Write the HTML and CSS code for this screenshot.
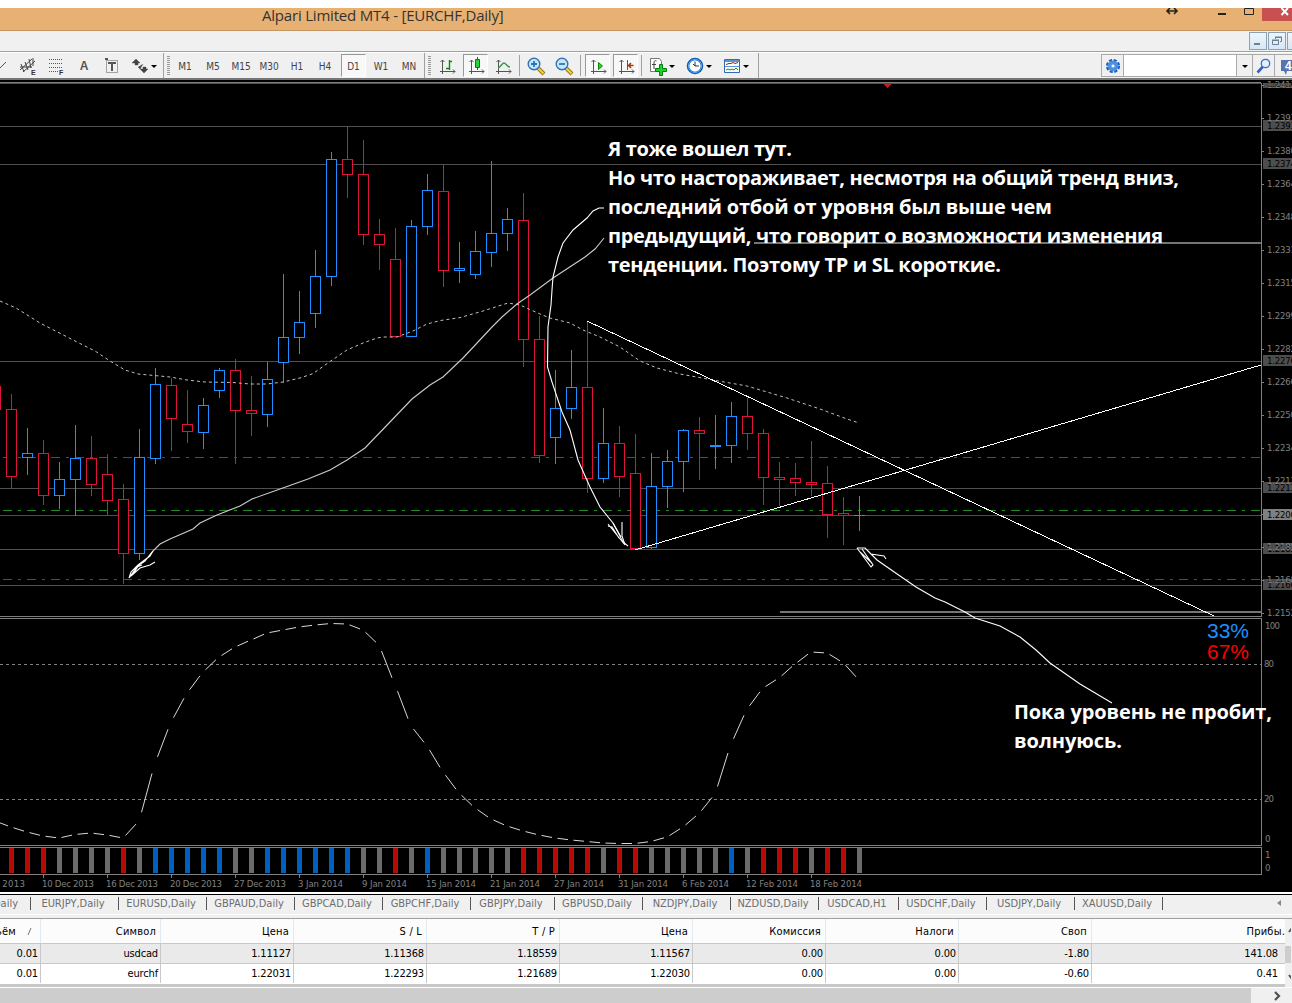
FILE: index.html
```html
<!DOCTYPE html>
<html lang="ru">
<head>
  <meta charset="UTF-8">
  <title>Alpari Limited MT4 - [EURCHF,Daily]</title>
  <link rel="stylesheet" href="styles.css">
</head>
<body>
<div class="terminal">

  <!-- Title bar -->
  <div class="titlebar">
    <span class="title">Alpari Limited MT4 - [EURCHF,Daily]</span>
    <svg class="window-buttons" width="132" height="22" viewBox="1160 8 132 22">
      <path d="M1167 11h10M1170 8l-3 3 3 3M1174 8l3 3-3 3" fill="none" stroke="#222" stroke-width="1.600"/>
      <rect x="1218" y="13" width="8" height="2" fill="#222"/>
      <path d="M1244.500 8.500h9v6h-9z" fill="none" stroke="#222"/>
      <rect x="1262" y="8" width="30" height="13" fill="#c75050"/>
      <path d="M1281.500 8l6.500 7M1288 8l-6.500 7" stroke="#fff" stroke-width="2"/>
    </svg>
  </div>

  <!-- Menu strip -->
  <div class="menubar">
    <span class="mdi"><svg width="16" height="16"><path d="M4 11h6" stroke="#6d7f92" stroke-width="2"/></svg></span>
    <span class="mdi"><svg width="16" height="16"><path d="M6.500 6V4.500h6v4H11M6 4h7M3.500 7.500h6v4h-6zM3 7h7" fill="none" stroke="#6d7f92"/></svg></span>
    <span class="mdi last"></span>
  </div>

  <!-- Toolbar -->
  <div class="toolbar">
    <div class="group tools">
      <span class="slot half"><svg width="14" height="22"><path d="M0 13l6-6" stroke="#555"/></svg></span>
      <span class="slot"><svg width="20" height="20"><path d="M2 14L14 3M5 16L17 5M3 8l3 8M7 6l3 8M11 3l2 9M15 2l0 8M2 11h12" fill="none" stroke="#444"/><text class="sub" x="13" y="19">E</text></svg></span>
      <span class="slot"><svg width="20" height="20"><path d="M3 3.500h14M3 7.500h14M3 11.500h14M3 15.500h9" stroke="#555" stroke-dasharray="1 1"/><text class="sub" x="13" y="19">F</text></svg></span>
      <span class="slot letter">A</span>
      <span class="slot"><svg width="20" height="20"><path d="M4.500 4.500h11v12h-11z" fill="none" stroke="#555" stroke-dasharray="1 1"/><path d="M6 7h8M10 7v8M3 3h3" stroke="#555" stroke-width="2"/></svg></span>
      <span class="slot"><svg width="20" height="20"><path d="M6 3l4 4H8v2H5V7H2zM8 11l2 2 3-5M13 11h3v2h2l-4 4-4-4h3z" fill="#444" stroke="#444" stroke-width=".4"/></svg></span>
      <span class="caret"></span>
    </div>
    <div class="group frames">
      <i class="grip"></i>
      <span class="slot">M1</span><span class="slot">M5</span><span class="slot">M15</span><span class="slot">M30</span><span class="slot">H1</span><span class="slot">H4</span><span class="slot pressed">D1</span><span class="slot">W1</span><span class="slot">MN</span>
    </div>
    <div class="group charts">
      <i class="grip"></i>
      <span class="slot"><svg width="20" height="20"><path d="M5.500 4v14M3 15.500h15M3.500 6l2-2 2 2M16 13.500l2 2-2 2" fill="none" stroke="#555"/><path d="M12.500 4v10M12 5.500h3M9 12.500h3" stroke="#0a8a0a" stroke-width="1.400"/></svg></span>
      <span class="slot pressed"><svg width="20" height="20"><path d="M5.500 4v14M3 15.500h15M3.500 6l2-2 2 2M16 13.500l2 2-2 2" fill="none" stroke="#555"/><path d="M11.500 1v13" stroke="#087808"/><path d="M9.500 3.500h4v8h-4z" fill="#25d335" stroke="#087808"/></svg></span>
      <span class="slot"><svg width="20" height="20"><path d="M5.500 4v14M3 15.500h15M3.500 6l2-2 2 2M16 13.500l2 2-2 2" fill="none" stroke="#555"/><path d="M5 12c3-1 4-5 6-5s3 4 6 4" fill="none" stroke="#3a9a4a" stroke-width="1.400"/></svg></span>
      <i class="sep"></i>
      <span class="slot"><svg width="20" height="20"><path d="M12 12l6 6" stroke="#9a7a10" stroke-width="4"/><path d="M12 12l5.500 5.500" stroke="#f3d04a" stroke-width="2"/><circle cx="8" cy="8" r="5.800" fill="#c5e7fa" stroke="#3273b8" stroke-width="1.400"/><path d="M5 8h6M8 5v6" stroke="#3273b8" stroke-width="1.800"/></svg></span>
      <span class="slot"><svg width="20" height="20"><path d="M12 12l6 6" stroke="#9a7a10" stroke-width="4"/><path d="M12 12l5.500 5.500" stroke="#f3d04a" stroke-width="2"/><circle cx="8" cy="8" r="5.800" fill="#c5e7fa" stroke="#3273b8" stroke-width="1.400"/><path d="M5 8h6" stroke="#3273b8" stroke-width="1.800"/></svg></span>
      <i class="sep"></i>
      <span class="slot pressed"><svg width="20" height="20"><path d="M5.500 4v14M3 15.500h15M3.500 6l2-2 2 2M16 13.500l2 2-2 2" fill="none" stroke="#555"/><path d="M10.500 6.500v7l4-3.500z" fill="#3c3" stroke="#0a8a0a"/></svg></span>
      <span class="slot pressed"><svg width="20" height="20"><path d="M5.500 4v14M3 15.500h15M3.500 6l2-2 2 2M16 13.500l2 2-2 2" fill="none" stroke="#555"/><path d="M11.500 4v10" stroke="#156b9a"/><path d="M12.500 9.500h5M15 7l-2.500 2.500L15 12" fill="none" stroke="#a8350f" stroke-width="1.500"/></svg></span>
      <i class="sep"></i>
      <span class="slot"><svg width="20" height="20"><path d="M2.500 2.500h9l2 3v10h-11z" fill="#fff" stroke="#777"/><path d="M8.500 5c-2-1-2.500 0-2.500 3v5M4 8.500h4" fill="none" stroke="#444"/><path d="M7.500 12.500h4v-4h3v4h4v3h-4v4h-3v-4h-4z" fill="#18d62a" stroke="#067a10"/></svg></span>
      <span class="caret"></span>
      <span class="slot"><svg width="20" height="20"><circle cx="10" cy="10" r="7" fill="#fff" stroke="#125dba" stroke-width="2.600"/><circle cx="10" cy="10" r="6.500" fill="none" stroke="#5db2f4"/><path d="M10 5.500V10h4M10 10l-2-2" fill="none" stroke="#333"/></svg></span>
      <span class="caret"></span>
      <span class="slot"><svg width="20" height="20"><path d="M2.500 3.500h15v13h-15z" fill="#fff" stroke="#2d6bb4"/><path d="M3 5h14" stroke="#5b96d3" stroke-width="2"/><path d="M3 10.500h14" stroke="#5b96d3"/><path d="M4 8.500l3-1 2 0 2-1 2 1 3-1" fill="none" stroke="#902a1c"/><path d="M4 14l2-1 2 1 2-1 2 1 2-2 2 2" fill="none" stroke="#16882a"/></svg></span>
      <span class="caret"></span>
    </div>
    <div class="search">
      <span class="gear"><svg width="16" height="16"><circle cx="8" cy="8" r="5.800" fill="none" stroke="#1d5cb8" stroke-width="2.600" stroke-dasharray="3 1.550"/><circle cx="8" cy="8" r="3.600" fill="#8fc0f2" stroke="#4d8fe0" stroke-width="3.600"/><circle cx="8" cy="8" r="1.300" fill="#fff"/></svg></span>
      <span class="field"></span>
      <span class="drop"><i class="caret"></i></span>
      <span class="find"><svg width="16" height="16"><path d="M1.500 14.500L7 8.500" stroke="#3a5fc0" stroke-width="2.600"/><circle cx="9.500" cy="5.500" r="4.200" fill="#e3f0fd" stroke="#3a6cc8" stroke-width="1.300"/></svg></span>
      <span class="chat"><svg width="12" height="18"><path d="M1 3h11v11H7l-1 4-2-4H1z" fill="#5873ad"/><text x="5" y="13" class="count">4</text></svg></span>
    </div>
  </div>

  <!-- Chart area, filled from script.js -->
  <svg class="chart" id="chart" width="1292" height="812" viewBox="0 80 1292 812">
    <g id="levels" shape-rendering="crispEdges"></g>
    <g id="candles" shape-rendering="crispEdges"></g>
    <polyline class="ma" points="0,301 16,308 40,323 75,341 95,351 110,361 125,370 138,374 170,377 187,380 205,382 233,382.500 250,384 267,384 283,382 300,378 313,373.600 330,361.500 347,350 363,343 377,338 383,337 397,337 413,331 427,324 440,320.600 460,317.600 483,311 508,303 520,305 540,314 550,318 570,323 583,330 600,337 620,347 640,361 657,368 680,374 713,380 747,386 787,398 820,409 847,419 859,423"/>
    <g class="trend" shape-rendering="crispEdges">
      <path d="M587 321L1214 616M635 550L1261 365"/>
    </g>
    <g id="oscillator"></g>
    <g id="strip" shape-rendering="crispEdges"></g>
    <g id="frame" shape-rendering="crispEdges"></g>
    <g id="axis"></g>

    <!-- hand drawn arrows -->
    <g class="pen">
      <path class="soft" d="M604 238L600 243 595 249 585 257 553 278 530 295 517 304 502 317 492 327 478 342 463 358 443 377 430 385 412 399 390 422 365 448 347 460 330 470 308 479 280 489 252 499 240 506 217 515 200 523 193 529 170 539 160 544 152 552"/>
      <path d="M152 552L145 561 139 565 135 571 129 578M129 578L131 572 138 565 150 556 153 551M129 578L137 567 142 565M131 576L140 568 150 565 155 562"/>
      <path d="M604 208H599L593 211 587 218 573 230 563 243 558 257 553 277 552 290 551 305 548 327 547.500 367 552 382 562 412 570 430 578 460 590 487 600 507 613 523 623 542 628 546"/>
      <path d="M608 524L625 545M608 526L612 527 619 538M622 522V536L625 545M613 523L621 537"/>
      <path d="M857 548H865L877 560 900 576 916 587 935 598 945 602 965 612 975 618 1000 626 1020 637 1036 650 1050 663 1080 684 1112 703M857 548L871 567 873 565 862 549M865 548L871 554 884 556 886 559M860 552L872 563"/>
    </g>

    <text class="pct up" x="1207" y="638" textLength="42">33%</text>
    <text class="pct down" x="1207" y="659" textLength="42">67%</text>

    <g class="note">
      <text x="608" y="156" textLength="184">Я тоже вошел тут.</text>
      <text x="608" y="185" textLength="571">Но что настораживает, несмотря на общий тренд вниз,</text>
      <text x="608" y="214" textLength="444">последний отбой от уровня был выше чем</text>
      <text x="608" y="243" textLength="555">предыдущий, что говорит о возможности изменения</text>
      <text x="608" y="272" textLength="393">тенденции. Поэтому TP и SL короткие.</text>
      <text x="1014" y="719" textLength="258">Пока уровень не пробит,</text>
      <text x="1014" y="748" textLength="108">волнуюсь.</text>
    </g>
  </svg>

  <!-- Chart tabs -->
  <div class="tabs">
    <span class="tab cut">CHF,Daily</span><span class="tab">EURJPY,Daily</span><span class="tab">EURUSD,Daily</span><span class="tab">GBPAUD,Daily</span><span class="tab">GBPCAD,Daily</span><span class="tab">GBPCHF,Daily</span><span class="tab mid">GBPJPY,Daily</span><span class="tab">GBPUSD,Daily</span><span class="tab">NZDJPY,Daily</span><span class="tab">NZDUSD,Daily</span><span class="tab small">USDCAD,H1</span><span class="tab">USDCHF,Daily</span><span class="tab">USDJPY,Daily</span><span class="tab">XAUUSD,Daily</span>
    <i class="scroll-left"></i>
  </div>

  <!-- Orders -->
  <div class="orders">
    <div class="table">
      <div class="row head">
        <span class="sorted">Объём <svg width="6" height="9"><path d="M1 8l3-7" stroke="#777"/></svg></span><span>Символ</span><span>Цена</span><span>S / L</span><span>T / P</span><span>Цена</span><span>Комиссия</span><span>Налоги</span><span>Своп</span><span class="profit">Прибы.</span>
      </div>
      <div class="row odd">
        <span>0.01</span><span>usdcad</span><span>1.11127</span><span>1.11368</span><span>1.18559</span><span>1.11567</span><span>0.00</span><span>0.00</span><span>-1.80</span><span>141.08</span>
      </div>
      <div class="row">
        <span>0.01</span><span>eurchf</span><span>1.22031</span><span>1.22293</span><span>1.21689</span><span>1.22030</span><span>0.00</span><span>0.00</span><span>-0.60</span><span>0.41</span>
      </div>
    </div>
    <div class="vscroll"><svg width="6" height="66"><path d="M4 13l3-4M4 56l3 4" stroke="#555" stroke-width="2"/><rect y="27" width="6" height="17" fill="#cdcdcd"/></svg></div>
  </div>
  <div class="hscroll"><i class="thumb"></i><svg width="12" height="12"><path d="M4 2l4 4-4 4" fill="none" stroke="#505050" stroke-width="2.200"/></svg></div>
</div>
<script src="script.js"></script>
</body>
</html>
```
FILE: styles.css
```css
* {
  box-sizing: border-box;
}

body {
  margin: 0;
  background: #fff;
  font-family: "DejaVu Sans Condensed", "DejaVu Sans", sans-serif;
  font-stretch: condensed;
  font-size: 11px;
  overflow: hidden;
}

.terminal {
  width: 1292px;
  height: 1003px;
  padding-top: 8px;
  display: flex;
  flex-direction: column;
  overflow: hidden;
}

.terminal > * {
  flex: none;
}

/* title */
.titlebar {
  height: 23px;
  background: #e7b174;
  border-bottom: 1px solid #c49562;
  display: flex;
  justify-content: space-between;
}

.title {
  padding-left: 262px;
  font: 15px/15px "Open Sans", sans-serif;
  letter-spacing: -0.2px;
  color: #333;
  white-space: nowrap;
}

/* menu */
.menubar {
  height: 21px;
  background: #f0f0f0;
  border-bottom: 1px solid #a0a0a0;
  display: flex;
  justify-content: flex-end;
  gap: 1px;
  padding-top: 1px;
}

.mdi {
  width: 18px;
  height: 18px;
  border: 1px solid #8ea0b4;
  background: linear-gradient(#eef6fc, #d5e6f5);
}

.mdi.last {
  width: 5px;
  border-right: 0;
}

/* toolbar */
.toolbar {
  height: 28px;
  background: #f0f0f0;
  border-top: 1px solid #fff;
  border-bottom: 2px solid #777;
  display: flex;
}

.group {
  display: flex;
  height: 25px;
  border-right: 1px solid #a0a0a0;
}

.tools {
  width: 164px;
}

.frames {
  width: 261px;
  padding-left: 3px;
}

.charts {
  width: 334px;
  padding-left: 3px;
}

.slot {
  flex: none;
  width: 28px;
  height: 25px;
  padding-top: 1px;
  display: flex;
  align-items: center;
  justify-content: center;
  color: #444;
  font-size: 10px;
}

.slot svg {
  flex: none;
}

.slot.half {
  width: 14px;
}

.slot.letter {
  font: bold 12px "Liberation Sans", sans-serif;
  color: #555;
}

.sub {
  font: bold 7px "Liberation Sans", sans-serif;
  fill: #333;
}

.slot.pressed {
  width: 25px;
  height: 23px;
  margin: 1px 1px 0 2px;
  background: #f8f8f8;
  border: 1px solid #999;
  border-right-color: #fff;
  border-bottom-color: #fff;
}

.caret {
  flex: none;
  width: 6px;
  height: 3px;
  align-self: center;
  border: 3px solid transparent;
  border-top-color: #000;
  border-bottom: 0;
  margin-top: 1px;
}

.tools .caret {
  margin-left: -3px;
}

.charts .caret {
  margin-left: -3px;
  margin-right: 6px;
}

.grip {
  width: 3px;
  height: 19px;
  margin: 3px 1px 0 0;
  background: repeating-linear-gradient(#999 0 1px, #f0f0f0 1px 2px);
}

.charts .grip {
  margin-right: 2px;
}

.sep {
  flex: none;
  width: 1px;
  height: 21px;
  margin: 2px 2px 0 2px;
  background: #a0a0a0;
}

.search {
  margin-left: auto;
  display: flex;
  width: 191px;
  height: 23px;
  margin-top: 1px;
  border: 1px solid #aaa;
  border-right: 0;
}

.search > span {
  display: flex;
  align-items: center;
  justify-content: center;
  border-right: 1px solid #aaa;
}

.search .gear {
  width: 22px;
}

.search .field {
  width: 113px;
  background: #fff;
}

.search .drop {
  width: 16px;
}

.search .find {
  width: 22px;
}

.search .chat {
  width: 17px;
  border-right: 0;
  justify-content: flex-end;
}

.count {
  font: bold 12px "Liberation Sans", sans-serif;
  fill: #fff;
}

/* chart */
.chart {
  display: block;
  background: #000;
}

.ma {
  fill: none;
  stroke: #c0c0c0;
  stroke-dasharray: 3 3;
}

.trend {
  fill: none;
  stroke: #fff;
}

.pen {
  fill: none;
  stroke: #fff;
  stroke-width: 1.1;
}

.pen .soft {
  stroke: #ccc;
}

.axis-text {
  font: 9.5px "DejaVu Sans Condensed", sans-serif;
  fill: #808080;
}

.axis-text.dark {
  fill: #000;
}

.pct {
  font: 21px "Liberation Sans", sans-serif;
}

.pct.up {
  fill: #1e90ff;
}

.pct.down {
  fill: #f00;
}

.note {
  font: bold 20px "Open Sans", sans-serif;
  fill: #fff;
}

/* tabs */
.tabs {
  height: 26px;
  background: #f0f0f0;
  border-top: 2px solid #fff;
  box-shadow: inset 0 1px 0 #000, inset 0 -3px 0 #f0f0f0, inset 0 -4px 0 #fff;
  display: flex;
  padding-top: 3px;
}

.tab {
  width: 88px;
  height: 13px;
  line-height: 13px;
  padding-right: 3px;
  border-right: 1px solid #555;
  text-align: center;
  color: #6d6d6d;
  white-space: nowrap;
}

.tab.cut {
  width: 31px;
  padding-right: 12px;
  display: flex;
  justify-content: flex-end;
}

.tab.mid {
  width: 84px;
}

.tab.small {
  width: 80px;
}

.scroll-left {
  margin-left: auto;
  margin-right: 11px;
  align-self: flex-start;
  margin-top: 3px;
  border: 3px solid transparent;
  border-right: 4px solid #888;
  border-left: 0;
}

/* orders */
.orders {
  display: flex;
  height: 69px;
  border-top: 1px solid #a0a0a0;
}

.table {
  width: 1285px;
  border-bottom: 3px solid #c8c8c8;
}

.row {
  display: grid;
  grid-template-columns: 41px 120px repeat(7, 133px) 193px;
  height: 20px;
  line-height: 19px;
  border-bottom: 1px solid #c8c8c8;
}

.row span {
  text-align: right;
  padding-right: 2px;
  border-right: 1px solid #c8c8c8;
  white-space: nowrap;
  overflow: hidden;
  letter-spacing: -0.15px;
}

.row span:last-child {
  border-right: 0;
  padding-right: 7px;
}

.row:last-child {
  height: 19px;
  border-bottom: 0;
}

.row.odd {
  background: #eaeaea;
}

.row.head {
  height: 25px;
  line-height: 25px;
  background: #fcfcfc;
}

.head span {
  padding-right: 4px;
  border-right-color: #dfeaf5;
  letter-spacing: 0.2px;
}

.head .sorted {
  display: flex;
  justify-content: flex-end;
  align-items: center;
  gap: 11px;
  padding-right: 7px;
}

.sorted svg {
  flex: none;
}

.row.head .profit {
  padding-right: 0;
}

.vscroll {
  width: 7px;
  background: #f0f0f0;
}

.hscroll {
  display: flex;
  align-items: center;
  height: 16px;
  border-top: 1px solid #fff;
  background: #f0f0f0;
}

.thumb {
  width: 1251px;
  height: 15px;
  background: #cdcdcd;
}

.hscroll svg {
  margin-left: 20px;
}
```
FILE: script.js
```js
const NS = 'http://www.w3.org/2000/svg';
const BLUE = '#1e90ff';
const RED = '#dc143c';
const STEP = 16;

function add(parent, tag, attrs, text) {
  const el = document.createElementNS(NS, tag);
  for (const key in attrs) el.setAttribute(key, attrs[key]);
  if (text !== undefined) el.textContent = text;
  document.getElementById(parent).appendChild(el);
}

function hline(parent, y, color, dash, x = 0, h = 1) {
  const attrs = { x1: x, x2: 1261, y1: y + h / 2, y2: y + h / 2, stroke: color, 'stroke-width': h };
  if (dash) attrs['stroke-dasharray'] = dash;
  add(parent, 'line', attrs);
}

// horizontal levels
[126, 164, 361, 488, 549, 585].forEach(y => hline('levels', y, '#505050'));
hline('levels', 457, '#a52a2a', '9 6 3 6', 3);
hline('levels', 579, '#a52a2a', '9 6 3 6', 3);
hline('levels', 510, '#228b22', '9 6 3 6', 3);
hline('levels', 515, '#a52a2a');
hline('levels', 242, '#747474', null, 754, 2);
hline('levels', 611, '#747474', null, 780, 2);

// high, body top, body bottom, low, direction
const candles = [
  [386, 386, 409, 409, 'r'], [394, 409, 476, 489, 'r'], [428, 453, 457, 475, 'b'], [440, 453, 495, 505, 'r'],
  [462, 479, 495, 509, 'b'], [425, 458, 479, 516, 'b'], [436, 458, 484, 496, 'r'], [454, 474, 500, 515, 'r'],
  [484, 499, 553, 584, 'r'], [429, 457, 553, 560, 'b'], [368, 384, 458, 464, 'b'], [378, 385, 418, 451, 'r'],
  [390, 424, 431, 443, 'r'], [398, 405, 432, 449, 'b'], [368, 370, 390, 398, 'b'], [359, 370, 410, 464, 'r'],
  [376, 410, 413, 436, 'r'], [362, 379, 414, 427, 'b'], [274, 337, 362, 383, 'b'], [291, 322, 337, 354, 'b'],
  [250, 276, 313, 328, 'b'], [152, 159, 276, 286, 'b'], [126, 159, 174, 198, 'r'], [140, 174, 234, 245, 'r'],
  [219, 234, 244, 270, 'r'], [228, 259, 336, 336, 'r'], [220, 226, 336, 336, 'b'], [174, 190, 226, 235, 'b'],
  [164, 191, 270, 287, 'r'], [242, 268, 270, 283, 'b'], [231, 251, 274, 279, 'b'], [161, 233, 252, 267, 'b'],
  [208, 219, 233, 251, 'b'], [193, 220, 339, 367, 'r'], [316, 339, 455, 463, 'r'], [370, 408, 437, 464, 'b'],
  [350, 387, 408, 419, 'b'], [321, 387, 478, 493, 'r'], [408, 443, 478, 483, 'b'], [426, 443, 476, 497, 'r'],
  [434, 473, 548, 549, 'r'], [453, 486, 547, 549, 'b'], [450, 461, 486, 508, 'b'], [429, 430, 461, 492, 'b'],
  [417, 430, 433, 480, 'r'], [415, 445, 446, 469, 'b'], [402, 416, 445, 463, 'b'], [398, 416, 433, 450, 'r'],
  [429, 433, 477, 505, 'r'], [462, 477, 479, 506, 'r'], [463, 478, 482, 496, 'r'], [441, 482, 484, 496, 'r'],
  [466, 483, 514, 538, 'r'], [497, 513, 515, 545, 'r'], [496, 515, 515, 531, 'b']
];

candles.forEach(([high, top, bottom, low, dir], i) => {
  const x = -5 + i * STEP + 0.5;
  const stroke = dir === 'b' ? BLUE : RED;
  add('candles', 'line', { x1: x, x2: x, y1: high, y2: low, stroke });
  if (top === bottom) {
    add('candles', 'line', { x1: x - 5.5, x2: x + 5.5, y1: top + 0.5, y2: top + 0.5, stroke });
  } else {
    add('candles', 'rect', { x: x - 5, y: top + 0.5, width: 10, height: bottom - top, stroke, fill: '#000' });
  }
});

// oscillator: one short stroke between neighbouring bars
[664, 799].forEach(y => hline('oscillator', y, '#808080', '3 3'));
const osc = [
  821, 827, 832, 836, 838, 834.5, 833, 835, 838, 821, 763, 722, 693, 672, 657, 647, 640, 633, 630, 627,
  625, 623.5, 624, 630, 645, 685, 726, 746, 772, 793, 808, 819, 826, 831, 835, 838, 840, 841.5, 843, 843.5,
  843.5, 841.5, 837, 827, 813.5, 794, 744, 709, 688, 678, 664, 652, 653, 662.5, 680
];
for (let i = 0; i < osc.length - 1; i++) {
  const x = -5 + i * STEP;
  const dy = osc[i + 1] - osc[i];
  add('oscillator', 'line', {
    x1: x + 2.5, y1: osc[i] + dy * 0.15, x2: x + 13, y2: osc[i] + dy * 0.82, stroke: '#d8d8d8'
  });
}

// signal strip
const colors = { r: '#b70a04', g: '#6b6b6b', b: '#0060bf' };
const strip = 'rrrggggrgbbbbbggbbbbbbggrgbgggggrrrrrgrrgggggbgrrrgrrg';
[...strip].forEach((c, i) => {
  add('strip', 'rect', { x: 9 + i * STEP, y: 848, width: 5, height: 25, fill: colors[c] });
});

// pane borders
hline('frame', 82, '#808080');
hline('frame', 83, '#505050');
[616, 618, 845, 847, 874].forEach(y => hline('frame', y, '#808080'));
[[83, 617], [618, 846], [847, 875]].forEach(([y1, y2]) => {
  add('frame', 'line', { x1: 1261.5, x2: 1261.5, y1, y2, stroke: '#808080' });
});
add('frame', 'path', { d: 'M883 84h9l-4.500 4z', fill: '#b22222' });

// price axis
const boxes = { 84: '1.2410', 126: '1.2393', 164: '1.2374', 361: '1.2276', 488: '1.2213', 549: '1.2183', 585: '1.2166' };
for (const y in boxes) {
  add('axis', 'rect', { x: 1263, y: Math.max(83, y - 6), width: 29, height: y < 90 ? 5 : 11, fill: '#4d4d4d' });
  add('axis', 'text', { class: 'axis-text dark', x: 1267, y: +y + 3, textLength: 29 }, boxes[y]);
}
const prices = ['1.2413', '1.2397', '1.2380', '1.2364', '1.2348', '1.2331', '1.2315', '1.2299', '1.2282',
  '1.2266', '1.2250', '1.2234', '1.2217', '', '1.2185', '1.2168', '1.2152'];
prices.forEach((p, i) => {
  const y = 85 + i * 33;
  add('axis', 'rect', { x: 1262, y, width: 2, height: 1, fill: '#808080' });
  add('axis', 'text', { class: 'axis-text', x: 1267, y: y + 3, textLength: 29 }, p);
});
add('axis', 'rect', { x: 1263, y: 509, width: 29, height: 11, fill: '#808080' });
add('axis', 'text', { class: 'axis-text dark', x: 1267, y: 518, textLength: 29 }, '1.2200');

[[1265, 629, '100', 15], [1264, 667, '80', 10], [1264, 802, '20', 10], [1265, 842, '0', 5], [1265, 858, '1', 5], [1265, 871, '0', 5]]
  .forEach(([x, y, t, w]) => add('axis', 'text', { class: 'axis-text', x, y, textLength: w }, t));

// dates
const dates = [
  [-27, '4 Dec 2013', 52], [42, '10 Dec 2013', 52], [106, '16 Dec 2013', 52], [170, '20 Dec 2013', 52],
  [234, '27 Dec 2013', 52], [298, '3 Jan 2014', 45], [362, '9 Jan 2014', 45], [426, '15 Jan 2014', 50],
  [490, '21 Jan 2014', 50], [554, '27 Jan 2014', 50], [618, '31 Jan 2014', 50], [682, '6 Feb 2014', 47],
  [746, '12 Feb 2014', 52], [810, '18 Feb 2014', 52]
];
dates.forEach(([x, t, w]) => {
  add('axis', 'rect', { x: x + 1, y: 875, width: 1, height: 3, fill: '#808080' });
  add('axis', 'text', { class: 'axis-text', x, y: 887, textLength: w }, t);
});
```
